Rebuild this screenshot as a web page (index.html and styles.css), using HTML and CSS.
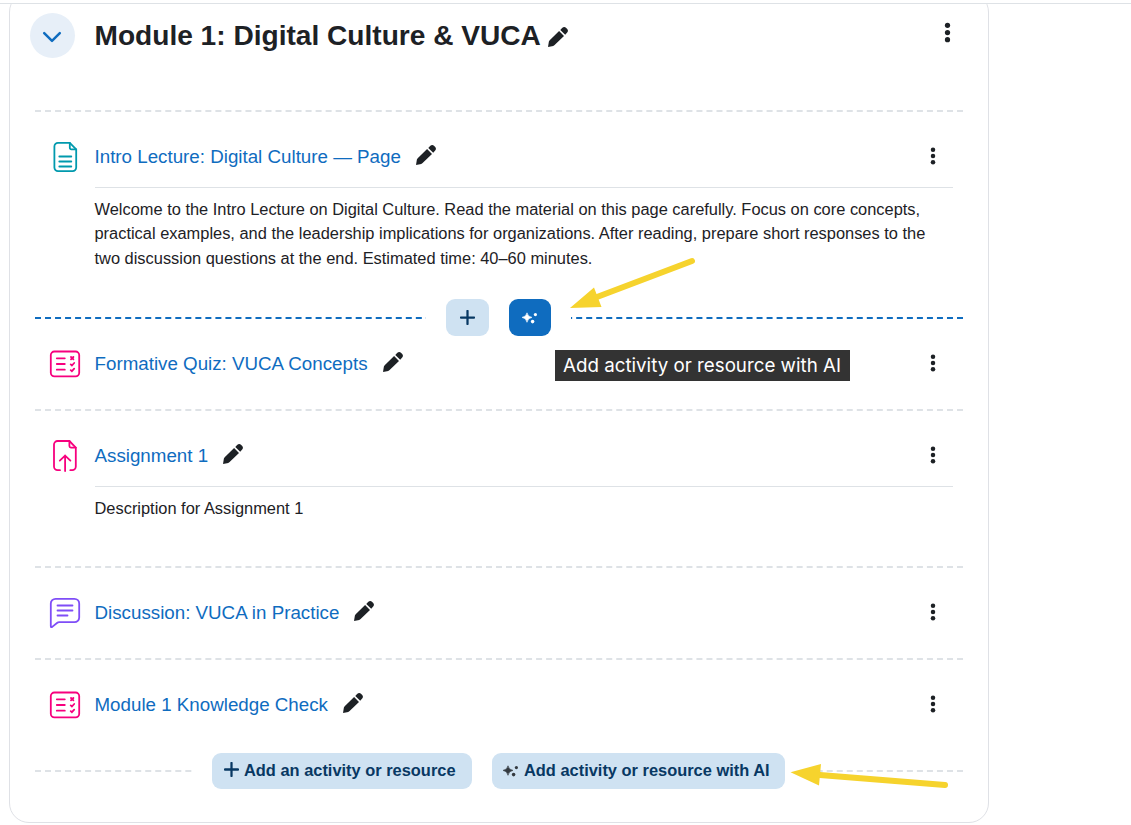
FILE: index.html
```html
<!DOCTYPE html>
<html lang="en">
<head>
<meta charset="utf-8">
<title>Module 1: Digital Culture &amp; VUCA</title>
<link rel="stylesheet" href="styles.css">
</head>
<body>
<svg class="sprite" aria-hidden="true">
  <symbol id="pencil" viewBox="0 0 20 20">
    <path d="M0 20 .9 14.6Q1.1 13.8 1.7 13.2L11.1 4 16 8.9 6.6 18.1Q6 18.7 5.2 18.9ZM12.3 2.9 14.1 1.1Q16.2-.9 18.2 1 L19 1.8Q20.9 3.8 19 5.8L17.2 7.7Z"/>
  </symbol>
  <symbol id="kebab" viewBox="0 0 6 18">
    <circle cx="3" cy="2.8" r="2.25"/><circle cx="3" cy="9" r="2.25"/><circle cx="3" cy="15.2" r="2.25"/>
  </symbol>
  <symbol id="quiz" viewBox="0 0 32 28">
    <g fill="none" stroke="currentColor" stroke-width="1.8" stroke-linecap="round">
      <rect x="1.8" y="1.5" width="28.4" height="24.9" rx="3.6"/>
      <path d="M7.8 8.3h8M7.8 14h8M7.8 19.7h8M22 7l2.4 2.4M24.4 7 22 9.4M21.7 14.4l1.2 1.1 2.3-2.5M21.7 20.1l1.2 1.1 2.3-2.5"/>
    </g>
  </symbol>
  <symbol id="sparkles" viewBox="0 0 16 12">
    <path d="M5 .8Q5.7 4.8 10 5.4 5.7 6 5 10.3 4.3 6 0 5.4 4.3 4.8 5 .8Z" stroke="currentColor" stroke-width=".6"/>
    <circle cx="13.4" cy="2.6" r="1.6"/><circle cx="10.6" cy="9.6" r="1.8"/>
  </symbol>
  <symbol id="plus" viewBox="0 0 14 14">
    <path d="M7 .9v12.2M.9 7h12.2" stroke="currentColor" stroke-width="2.1" stroke-linecap="round"/>
  </symbol>
</svg>

<div class="topbar"></div>
<main class="page">
  <section class="card">
    <header class="section-head">
      <button class="toggle" aria-label="Collapse"><svg width="20" height="12" viewBox="0 0 20 12"><path d="M2.2 2.2 10 9.9l7.8-7.7" fill="none" stroke="currentColor" stroke-width="2.5" stroke-linecap="round" stroke-linejoin="round"/></svg></button>
      <h2 class="section-title">Module 1: Digital Culture &amp; VUCA</h2>
      <svg class="pencil section-pencil"><use href="#pencil"/></svg>
      <svg class="kebab kebab-large"><use href="#kebab"/></svg>
    </header>

    <article class="activity intro">
      <div class="icon teal"><svg width="32" height="32" viewBox="0 0 32 32"><g fill="none" stroke="currentColor" stroke-width="1.8" stroke-linecap="round" stroke-linejoin="round"><path d="M20.8 1.8H9a3.6 3.6 0 0 0-3.6 3.6v21.2A3.6 3.6 0 0 0 9 30.2h14.6a3.6 3.6 0 0 0 3.6-3.6V8.3Z"/><path d="M20.8 1.8v5a1.5 1.5 0 0 0 1.5 1.5h4.9M10.3 15.5h12M10.3 20.5h12M10.3 25.5h12"/></g></svg></div>
      <div class="body">
        <div class="title-row ruled"><a class="name">Intro Lecture: Digital Culture — Page</a><svg class="pencil"><use href="#pencil"/></svg><svg class="kebab"><use href="#kebab"/></svg></div>
        <p class="desc">Welcome to the Intro Lecture on Digital Culture. Read the material on this page carefully. Focus on core concepts,<br>practical examples, and the leadership implications for organizations. After reading, prepare short responses to the<br>two discussion questions at the end. Estimated time: 40–60 minutes.</p>
      </div>
    </article>

    <article class="activity active">
      <div class="insert"><button class="square"><svg width="15" height="15"><use href="#plus"/></svg></button><button class="square square-ai"><svg width="16" height="12"><use href="#sparkles"/></svg></button></div>
      <div class="tooltip">Add activity or resource with AI</div>
      <div class="icon pink"><svg width="32" height="28"><use href="#quiz"/></svg></div>
      <div class="body">
        <div class="title-row"><a class="name">Formative Quiz: VUCA Concepts</a><svg class="pencil"><use href="#pencil"/></svg><svg class="kebab"><use href="#kebab"/></svg></div>
      </div>
    </article>

    <article class="activity assignment">
      <div class="icon pink"><svg width="32" height="32" viewBox="0 0 32 32"><g fill="none" stroke="currentColor" stroke-width="1.8" stroke-linecap="round" stroke-linejoin="round"><path d="M11 30.2H8.6A3.6 3.6 0 0 1 5 26.6V4.6A3.6 3.6 0 0 1 8.6 1h11.8l6.4 6.6v19a3.6 3.6 0 0 1-3.6 3.6H21.3"/><path d="M20.4 1v5.1a1.5 1.5 0 0 0 1.5 1.5h4.9M16.1 31V15.5M10.8 20.6l5.3-5 5.3 5"/></g></svg></div>
      <div class="body">
        <div class="title-row ruled"><a class="name">Assignment 1</a><svg class="pencil"><use href="#pencil"/></svg><svg class="kebab"><use href="#kebab"/></svg></div>
        <p class="desc">Description for Assignment 1</p>
      </div>
    </article>

    <article class="activity">
      <div class="icon violet"><svg width="32" height="32" viewBox="0 0 32 32"><g fill="none" stroke="currentColor" stroke-width="1.8" stroke-linecap="round" stroke-linejoin="round"><path d="M6.6 1.8H25.4a4.8 4.8 0 0 1 4.8 4.8V20.4a4.8 4.8 0 0 1-4.8 4.8H10.3Q9 25.2 8 26L3.2 29.9Q1.8 30.8 1.8 29V6.6A4.8 4.8 0 0 1 6.6 1.8Z"/><path d="M8.5 8.5h15M8.5 13.5h15M8.5 18.5h10"/></g></svg></div>
      <div class="body">
        <div class="title-row"><a class="name">Discussion: VUCA in Practice</a><svg class="pencil"><use href="#pencil"/></svg><svg class="kebab"><use href="#kebab"/></svg></div>
      </div>
    </article>

    <article class="activity check">
      <div class="icon pink"><svg width="32" height="28"><use href="#quiz"/></svg></div>
      <div class="body">
        <div class="title-row"><a class="name">Module 1 Knowledge Check</a><svg class="pencil"><use href="#pencil"/></svg><svg class="kebab"><use href="#kebab"/></svg></div>
      </div>
    </article>

    <footer class="section-foot">
      <div class="insert foot-insert">
        <button class="add add-plain"><svg width="15" height="15"><use href="#plus"/></svg><span>Add an activity or resource</span></button>
        <button class="add add-ai"><svg width="16" height="12"><use href="#sparkles"/></svg><span>Add activity or resource with AI</span></button>
      </div>
    </footer>
  </section>
</main>

<svg class="arrows" width="1131" height="825" viewBox="0 0 1131 825">
  <path d="M692 261 597 297M945 785 820 775" stroke-width="6" stroke-linecap="round"/>
  <path d="M570 308 594 287.5 601.5 307ZM790.5 772.3 821 764 819 785.5Z" stroke="none"/>
</svg>
</body>
</html>
```
FILE: styles.css
```css
* { box-sizing: border-box; }
body {
  margin: 0;
  height: 825px;
  overflow: hidden;
  background: #fff;
  color: #1d2125;
  font-family: "Liberation Sans", Arial, sans-serif;
}
svg { display: block; fill: currentColor; flex: none; }
button { border: 0; padding: 0; font: inherit; color: inherit; }
.sprite { position: absolute; width: 0; height: 0; }

.topbar { height: 4px; border-bottom: 1px solid #dee2e6; }
.page { height: 821px; overflow: hidden; }
.card {
  width: 980px;
  height: 831px;
  margin: -12px 0 0 9px;
  padding: 11px 25px 0;
  border: 1px solid #dfe1e6;
  border-radius: 20px;
}

.section-head {
  height: 106px;
  padding-top: 9px;
  display: flex;
  align-items: flex-start;
}
.toggle {
  display: flex;
  align-items: center;
  justify-content: center;
  width: 45px;
  height: 45px;
  margin-left: -5px;
  border-radius: 50%;
  background: #e7eff8;
  color: #0f6cbf;
}
.toggle svg { margin: 2px 1px 0 0; }
.section-title {
  margin: 6px 0 0 19.5px;
  font-size: 28.1px;
  line-height: 33px;
  white-space: nowrap;
}
.section-pencil { margin: 14px 0 0 7.5px; }
.pencil { width: 20px; height: 20px; }
.kebab { width: 6px; height: 18px; margin: -1px 0 0 auto; }
.kebab-large { width: 7px; height: 21px; margin: 8.5px 12px 0 auto; }

.activity {
  position: relative;
  display: flex;
  height: 92px;
  padding: 14px 10px 0 14px;
  border-top: 2px dashed #dee2e6;
}
.intro { height: 207px; }
.assignment { height: 157px; }
.check { height: 112px; }
.active { border-top-color: #0f6cbf; }
.icon { display: flex; align-items: center; width: 45.5px; height: 61px; flex: none; }
.teal { color: #0099ad; }
.pink { color: #f7007e; }
.violet { color: #7f4df7; }
.body { flex: 1; }
.title-row { display: flex; align-items: center; height: 61px; padding-right: 17.5px; }
.ruled { height: 62px; border-bottom: 1px solid #dee2e6; }
.name { color: #0f6cbf; font-size: 18.75px; line-height: 21px; white-space: nowrap; }
.title-row .pencil { margin: -2.5px 0 0 15px; }
.desc {
  margin: 8.75px 0 0;
  font-size: 16.41px;
  line-height: 24.4px;
  white-space: nowrap;
}

.insert {
  position: absolute;
  left: 391px;
  top: -20px;
  display: flex;
  gap: 20px;
  padding: 0 20px;
  background: #fff;
}
.square {
  display: flex;
  align-items: center;
  justify-content: center;
  width: 43px;
  height: 37px;
  border-radius: 9px;
  background: #cfe2f2;
  color: #083863;
}
.square svg { margin: 0 1px 0 0; }
.square-ai { width: 42px; background: #0f6cbf; color: #fff; }
.tooltip {
  position: absolute;
  left: 520px;
  top: 31px;
  width: 295px;
  height: 31px;
  padding-left: 8px;
  background: #333;
  color: #fff;
  font: 18.75px/31px Inter, sans-serif;
  white-space: nowrap;
}

.section-foot { position: relative; border-top: 2px dashed #dee2e6; }
.foot-insert { left: 157px; top: -19px; }
.add {
  display: flex;
  align-items: center;
  height: 36px;
  border-radius: 9px;
  background: #cfe2f2;
  color: #083863;
  font-size: 16.41px;
  font-weight: bold;
  white-space: nowrap;
}
.add span { margin-top: -2px; }
.add-plain { width: 260px; padding-left: 12px; gap: 5px; }
.add-plain svg { margin-top: -3px; }
.add-ai { width: 293px; padding-left: 11px; gap: 5px; }
.add-ai svg { color: #343a40; }

.arrows { position: absolute; left: 0; top: 0; fill: #f6d32d; stroke: #f6d32d; pointer-events: none; }
```
